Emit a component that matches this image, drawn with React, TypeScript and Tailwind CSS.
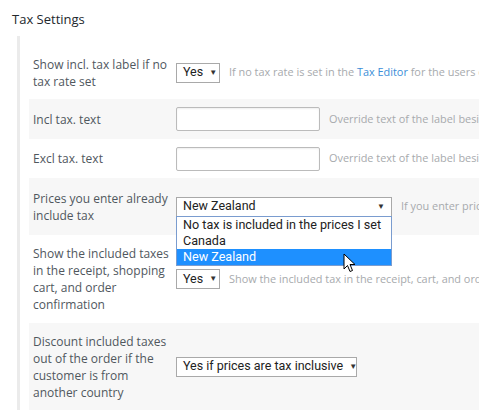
import React from "react";

const label = "w-[143px] shrink-0 pr-[3px] text-[12px] leading-[17px] text-[#50575e]";
const desc = "ml-[9px] whitespace-nowrap text-[10.9px] text-[#a7aaad]";
const select =
  "flex h-[20px] shrink-0 items-center justify-between whitespace-nowrap border border-[#a9a9a9] bg-white pl-[6px] pr-[6px] text-[12.5px] text-[#222] font-['Roboto','Liberation_Sans',Arial,sans-serif]";

function Caret() {
  return <span className="ml-[6px] text-[8px] leading-none text-[#333]">▼</span>;
}

function Row({ gray, h, children }: { gray?: boolean; h: string; children: React.ReactNode }) {
  return (
    <div className={`flex items-center pl-[4px] ${h} ${gray ? "bg-[#f7f7f7]" : ""}`}>{children}</div>
  );
}

export default function App() {
  return (
    <div className="h-[415px] w-[479px] overflow-hidden bg-white font-['Open_Sans',sans-serif]">
      <h2 className="pl-[12px] pt-[8px] text-[13px] leading-[22px] text-[#23282d]">Tax Settings</h2>
      <div className="ml-[17px] mt-[6px] border-l-[3px] border-[#ebebeb] pl-[9px] pt-[10px]">
        <Row h="h-[53px]">
          <div className={label}>Show incl. tax label if no tax rate set</div>
          <div className={`${select} w-[44px]`}>
            Yes
            <Caret />
          </div>
          <div className={desc}>
            If no tax rate is set in the <span className="text-[#3b8ed8]">Tax Editor</span> for the users country
          </div>
        </Row>
        <Row gray h="h-[40px]">
          <div className={label}>Incl tax. text</div>
          <div className="h-[24px] w-[144px] shrink-0 rounded-[2px] border border-[#bbb] bg-white shadow-[inset_0_1px_2px_rgba(0,0,0,0.07)]" />
          <div className={desc}>Override text of the label beside prices</div>
        </Row>
        <Row h="h-[39px]">
          <div className={label}>Excl tax. text</div>
          <div className="h-[24px] w-[144px] shrink-0 rounded-[2px] border border-[#bbb] bg-white shadow-[inset_0_1px_2px_rgba(0,0,0,0.07)]" />
          <div className={desc}>Override text of the label beside prices</div>
        </Row>
        <Row gray h="h-[57px]">
          <div className={label}>Prices you enter already include tax</div>
          <div className="relative">
            <div className={`${select} w-[216px] border-[#7aa7e0]`}>
              New Zealand
              <Caret />
            </div>
            <div className="absolute left-0 top-[19px] z-10 w-[216px] whitespace-nowrap border border-[#7a9ccf] bg-white font-['Roboto','Liberation_Sans',Arial,sans-serif] text-[12.6px] leading-[16px] text-[#222]">
              <div className="px-[6px]">No tax is included in the prices I set</div>
              <div className="px-[6px]">Canada</div>
              <div className="bg-[#1e90ff] px-[6px] text-white">New Zealand</div>
              <svg className="absolute left-[166px] top-[36px]" width="14" height="20" viewBox="0 0 14 20">
                <path d="M1 1 L1 16 L4.5 12.5 L7 18.5 L9.5 17.5 L7 11.5 L12 11.5 Z" fill="#fff" stroke="#000" strokeWidth="1" strokeLinejoin="round" />
              </svg>
            </div>
          </div>
          <div className={desc}>If you enter prices including tax</div>
        </Row>
        <Row h="h-[88px]">
          <div className={label}>Show the included taxes in the receipt, shopping cart, and order confirmation</div>
          <div className={`${select} w-[44px]`}>
            Yes
            <Caret />
          </div>
          <div className={desc}>Show the included tax in the receipt, cart, and order</div>
        </Row>
        <Row gray h="h-[87px]">
          <div className={label}>Discount included taxes out of the order if the customer is from another country</div>
          <div className={`${select} w-[181px]`}>
            Yes if prices are tax inclusive
            <Caret />
          </div>
        </Row>
      </div>
    </div>
  );
}
